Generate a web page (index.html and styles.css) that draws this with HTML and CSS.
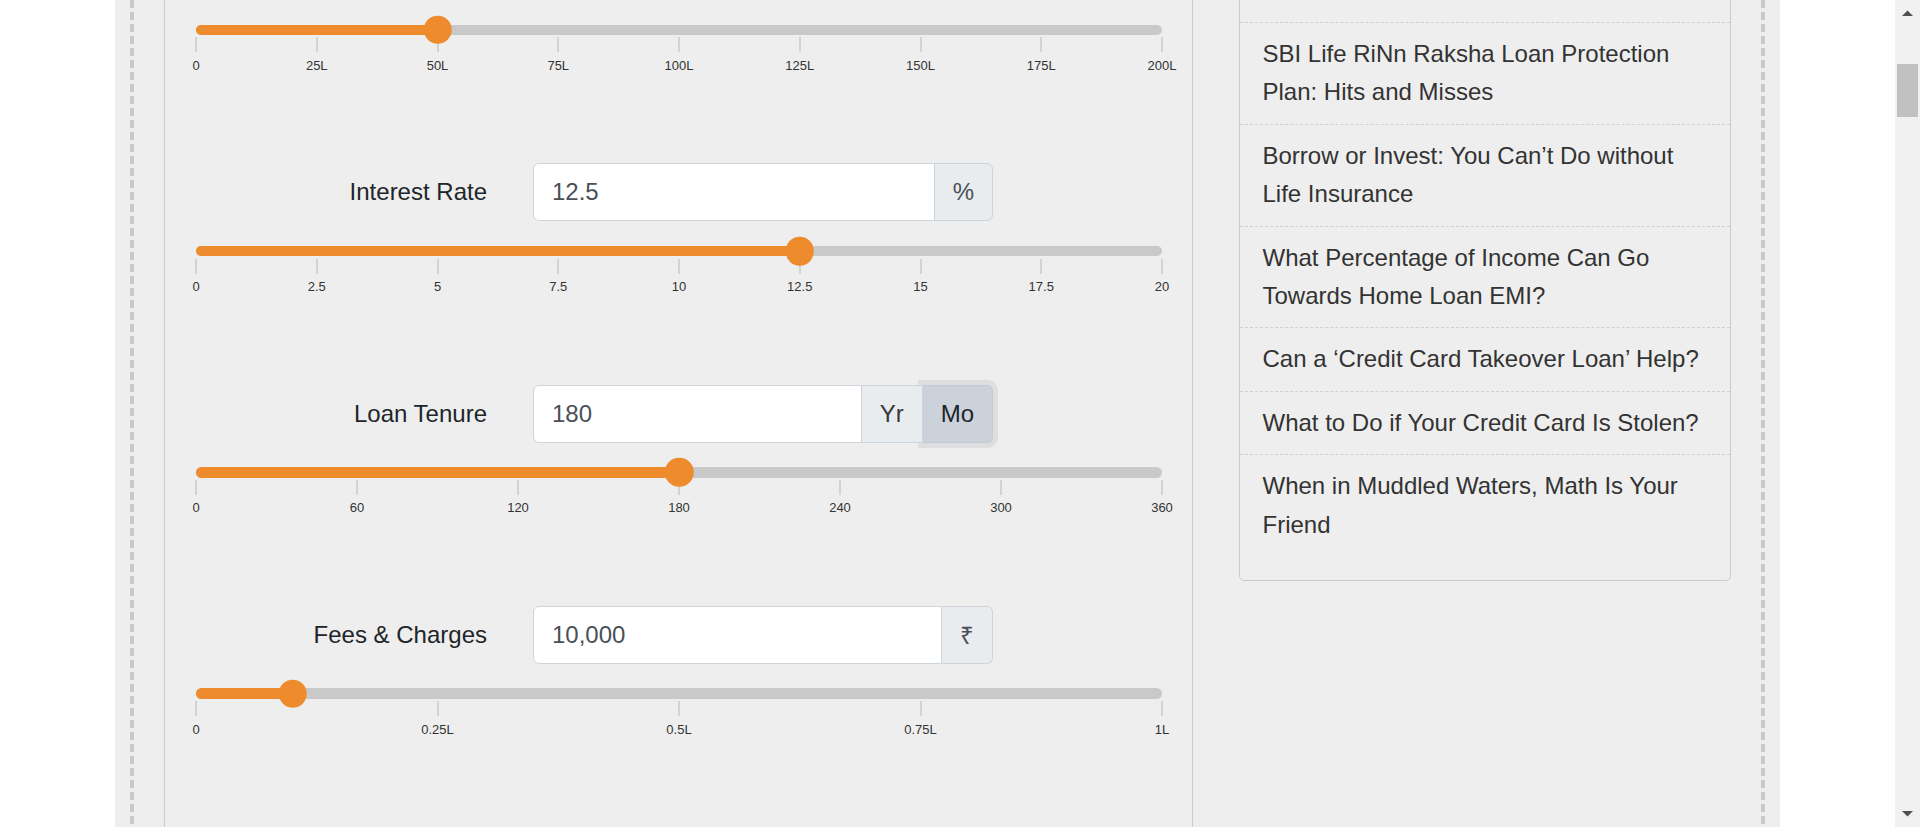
FILE: index.html
```html
<!DOCTYPE html>
<html lang="en">
<head>
<meta charset="utf-8">
<title>EMI Calculator</title>
<link rel="stylesheet" href="styles.css">
</head>
<body>
<div class="viewport">
  <div class="container">
    <div class="frame">
      <div class="content">
        <section class="calc-card">
          <div class="field">
            <div class="field-row">
              <span class="field-label"></span>
              <div class="input-group">
                <input class="form-input" type="text" value="" aria-label="Loan Amount">
                <span class="addon addon-last addon-blank"></span>
              </div>
            </div>
            <div class="slider">
              <div class="fill" style="width:25%"></div>
              <div class="thumb" style="left:25%"></div>
            </div>
            <div class="pips">
              <div class="pip"><span class="pip-tick"></span><span class="pip-label">0</span></div>
              <div class="pip"><span class="pip-tick"></span><span class="pip-label">25L</span></div>
              <div class="pip"><span class="pip-tick"></span><span class="pip-label">50L</span></div>
              <div class="pip"><span class="pip-tick"></span><span class="pip-label">75L</span></div>
              <div class="pip"><span class="pip-tick"></span><span class="pip-label">100L</span></div>
              <div class="pip"><span class="pip-tick"></span><span class="pip-label">125L</span></div>
              <div class="pip"><span class="pip-tick"></span><span class="pip-label">150L</span></div>
              <div class="pip"><span class="pip-tick"></span><span class="pip-label">175L</span></div>
              <div class="pip"><span class="pip-tick"></span><span class="pip-label">200L</span></div>
            </div>
          </div>

          <div class="field">
            <div class="field-row">
              <label class="field-label">Interest Rate</label>
              <div class="input-group">
                <input class="form-input" type="text" value="12.5">
                <span class="addon addon-last">%</span>
              </div>
            </div>
            <div class="slider">
              <div class="fill" style="width:62.5%"></div>
              <div class="thumb" style="left:62.5%"></div>
            </div>
            <div class="pips">
              <div class="pip"><span class="pip-tick"></span><span class="pip-label">0</span></div>
              <div class="pip"><span class="pip-tick"></span><span class="pip-label">2.5</span></div>
              <div class="pip"><span class="pip-tick"></span><span class="pip-label">5</span></div>
              <div class="pip"><span class="pip-tick"></span><span class="pip-label">7.5</span></div>
              <div class="pip"><span class="pip-tick"></span><span class="pip-label">10</span></div>
              <div class="pip"><span class="pip-tick"></span><span class="pip-label">12.5</span></div>
              <div class="pip"><span class="pip-tick"></span><span class="pip-label">15</span></div>
              <div class="pip"><span class="pip-tick"></span><span class="pip-label">17.5</span></div>
              <div class="pip"><span class="pip-tick"></span><span class="pip-label">20</span></div>
            </div>
          </div>

          <div class="field">
            <div class="field-row">
              <label class="field-label">Loan Tenure</label>
              <div class="input-group">
                <input class="form-input" type="text" value="180">
                <span class="addon unit-yr">Yr</span>
                <span class="addon addon-last unit-mo">Mo</span>
              </div>
            </div>
            <div class="slider">
              <div class="fill" style="width:50%"></div>
              <div class="thumb" style="left:50%"></div>
            </div>
            <div class="pips">
              <div class="pip"><span class="pip-tick"></span><span class="pip-label">0</span></div>
              <div class="pip"><span class="pip-tick"></span><span class="pip-label">60</span></div>
              <div class="pip"><span class="pip-tick"></span><span class="pip-label">120</span></div>
              <div class="pip"><span class="pip-tick"></span><span class="pip-label">180</span></div>
              <div class="pip"><span class="pip-tick"></span><span class="pip-label">240</span></div>
              <div class="pip"><span class="pip-tick"></span><span class="pip-label">300</span></div>
              <div class="pip"><span class="pip-tick"></span><span class="pip-label">360</span></div>
            </div>
          </div>

          <div class="field">
            <div class="field-row">
              <label class="field-label">Fees &amp; Charges</label>
              <div class="input-group">
                <input class="form-input" type="text" value="10,000">
                <span class="addon addon-last">₹</span>
              </div>
            </div>
            <div class="slider">
              <div class="fill" style="width:10%"></div>
              <div class="thumb" style="left:10%"></div>
            </div>
            <div class="pips">
              <div class="pip"><span class="pip-tick"></span><span class="pip-label">0</span></div>
              <div class="pip"><span class="pip-tick"></span><span class="pip-label">0.25L</span></div>
              <div class="pip"><span class="pip-tick"></span><span class="pip-label">0.5L</span></div>
              <div class="pip"><span class="pip-tick"></span><span class="pip-label">0.75L</span></div>
              <div class="pip"><span class="pip-tick"></span><span class="pip-label">1L</span></div>
            </div>
          </div>
        </section>

        <aside class="side-card">
          <div class="side-item">SBI Life RiNn Raksha Loan Protection Plan: Hits and Misses</div>
          <div class="side-item">Borrow or Invest: You Can’t Do without Life Insurance</div>
          <div class="side-item">What Percentage of Income Can Go Towards Home Loan EMI?</div>
          <div class="side-item">Can a ‘Credit Card Takeover Loan’ Help?</div>
          <div class="side-item">What to Do if Your Credit Card Is Stolen?</div>
          <div class="side-item">When in Muddled Waters, Math Is Your Friend</div>
        </aside>
      </div>
    </div>
  </div>
</div>
<div class="scrollbar">
  <div class="sb-btn"><svg width="25" height="25" viewBox="0 0 25 25"><polygon points="7,16 18,16 12.5,10.5" fill="#505050"/></svg></div>
  <div class="sb-thumb"></div>
  <div class="sb-space"></div>
  <div class="sb-btn"><svg width="25" height="25" viewBox="0 0 25 25"><polygon points="7,9 18,9 12.5,14.5" fill="#505050"/></svg></div>
</div>
</body>
</html>
```

FILE: styles.css
```css
* { box-sizing: border-box; }
html, body { margin: 0; height: 100%; }
body {
  display: flex;
  height: 827px;
  overflow: hidden;
  background: #fff;
  font-family: "Liberation Sans", Arial, sans-serif;
  color: #212529;
}
.viewport { flex: 1; min-width: 0; height: 100%; overflow: hidden; }
.container {
  width: 1665px;
  height: 100%;
  margin: 0 auto;
  background: #eeeeee;
  padding: 0 15px;
}
.frame {
  height: 100%;
  overflow: hidden;
  padding: 0 34px;
  background-image:
    repeating-linear-gradient(to bottom, #c9c9c9 0 8px, transparent 8px 12px),
    repeating-linear-gradient(to bottom, #c9c9c9 0 8px, transparent 8px 12px);
  background-size: 4px 100%, 4px 100%;
  background-position: left top, right top;
  background-repeat: no-repeat;
}
.content {
  display: flex;
  gap: 46px;
  align-items: flex-start;
  margin-top: -100px;
}
.calc-card {
  width: 1029px;
  flex: none;
  min-height: 1100px;
  border-left: 1px solid #cbcbcb;
  border-right: 1px solid #cbcbcb;
  padding: 42px 30px 0 31px;
}
.field { padding-bottom: 90.4px; }
.field-row { display: flex; align-items: center; gap: 46px; }
.field-label {
  width: 291px;
  flex: none;
  text-align: right;
  font-size: 24px;
  color: #212529;
}
.input-group { display: flex; width: 460px; height: 58px; flex: none; }
.form-input {
  flex: 1;
  min-width: 0;
  height: 100%;
  border: 1px solid #ced4da;
  border-radius: 6px 0 0 6px;
  padding: 0 18px;
  font-family: inherit;
  font-size: 24px;
  color: #495057;
  background: #fff;
  outline: none;
}
.addon {
  display: flex;
  align-items: center;
  padding: 0 18px;
  background: #e9ecef;
  border: 1px solid #ced4da;
  border-left: none;
  font-size: 24px;
  color: #495057;
}
.addon-blank { width: 49px; }
.addon-last { border-radius: 0 6px 6px 0; }
.unit-yr { position: relative; z-index: 2; color: #343a40; border-radius: 0; }
.unit-mo {
  position: relative;
  z-index: 1;
  background: #cbd2d9;
  color: #212529;
  border-color: #c3cad1;
  box-shadow: 0 0 0 5px #dcdee0;
}
.slider {
  position: relative;
  height: 10.5px;
  margin-top: 24.7px;
  background: #c9c9c9;
  border-radius: 6px;
}
.fill { height: 100%; background: #ee8c2d; border-radius: 6px 0 0 6px; }
.thumb {
  position: absolute;
  top: 50%;
  width: 28.5px;
  height: 28.5px;
  border-radius: 50%;
  background: #ee8c2d;
  transform: translate(-50%, -50%);
}
.pips { display: flex; justify-content: space-between; margin-top: 2.3px; }
.pip { width: 0; display: flex; flex-direction: column; align-items: center; }
.pip-tick { display: block; width: 2px; height: 15px; background: #d3d3d3; flex: none; }
.pip-label {
  display: block;
  margin-top: 5.4px;
  font-size: 13px;
  line-height: 15px;
  color: #333;
  white-space: nowrap;
}
.side-card {
  width: 492px;
  flex: none;
  border: 1px solid #cbcbcb;
  border-radius: 5px;
  padding: 121px 0 24px;
}
.side-item {
  border-top: 1px dashed #d0d0d0;
  padding: 12px 22.5px;
  font-size: 24px;
  line-height: 38.4px;
  color: #333;
}
.scrollbar {
  width: 25px;
  flex: none;
  height: 100%;
  background: #f1f1f1;
  display: flex;
  flex-direction: column;
}
.sb-btn { height: 25px; flex: none; }
.sb-btn svg { display: block; }
.sb-thumb { margin: 39px 2px 0; height: 53px; background: #c1c1c1; flex: none; }
.sb-space { flex: 1; }
```
